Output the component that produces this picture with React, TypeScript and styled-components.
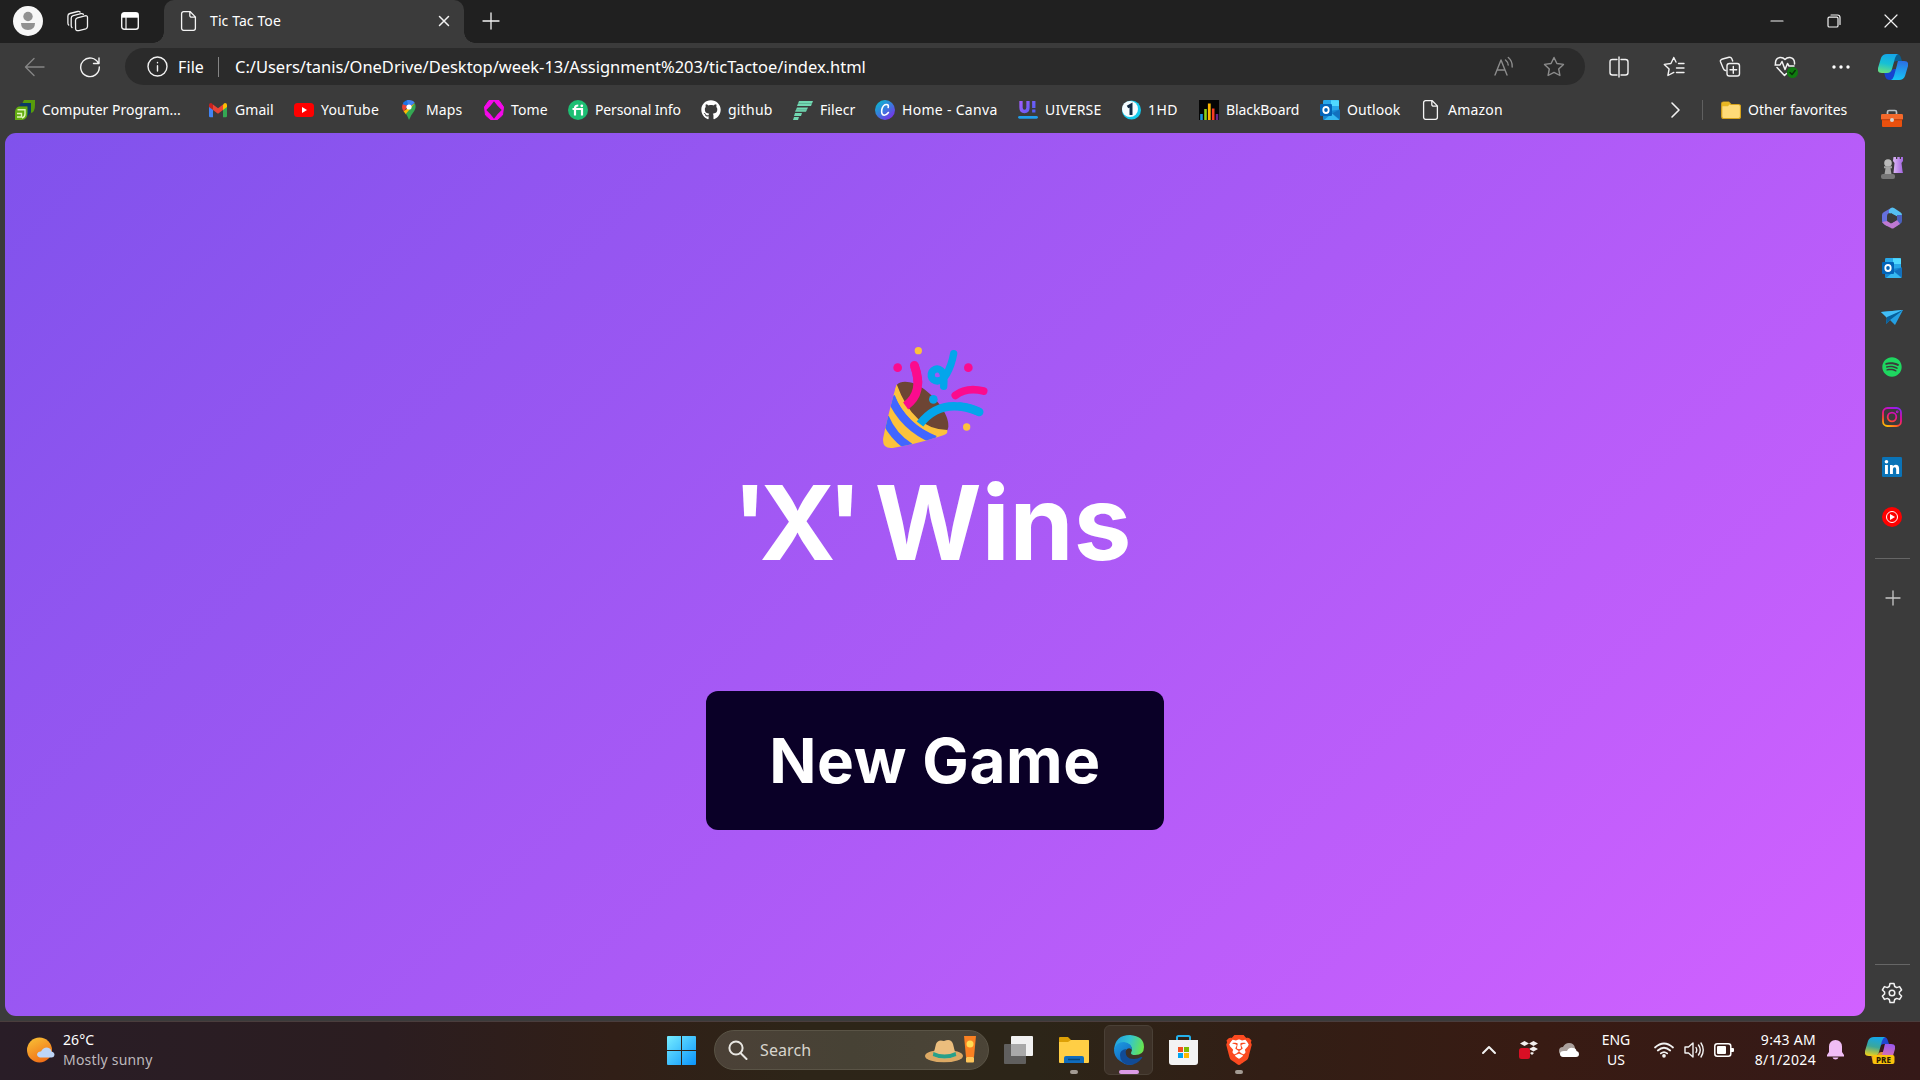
import React from "react";
import styled, { createGlobalStyle } from "styled-components";
import { FaGithub, FaSpotify } from "react-icons/fa";
import { SiBrave } from "react-icons/si";

const Global = createGlobalStyle`
  * { box-sizing: border-box; }
  html, body { margin: 0; background: #3b3b3b; overflow: hidden; }
  body { font-family: "Noto Sans", "Open Sans", sans-serif; color: #fff; }
  svg { display: block; flex: none; }
`;

const Screen = styled.div`
  width: 1920px;
  height: 1080px;
  display: flex;
  flex-direction: column;
  background: #3b3b3b;
`;

const TabStrip = styled.header`
  height: 43px;
  background: #202020;
  display: flex;
  align-items: center;
  padding-bottom: 1px;
`;

const Slot = styled.div<{ $w: number; $h?: number }>`
  width: ${(p) => p.$w}px;
  height: ${(p) => (p.$h ? `${p.$h}px` : "auto")};
  flex: none;
  display: flex;
  align-items: center;
  justify-content: center;
`;

const Tab = styled.div`
  position: relative;
  width: 300px;
  height: 43px;
  margin-bottom: -1px;
  padding: 0 12px 2px 15px;
  display: flex;
  align-items: center;
  background: #3b3b3b;
  border-radius: 10px 10px 0 0;
  &::before, &::after {
    content: "";
    position: absolute;
    bottom: 0;
    width: 11px;
    height: 11px;
  }
  &::before { right: 100%; background: radial-gradient(circle at 0 0, transparent 10.5px, #3b3b3b 11px); }
  &::after { left: 100%; background: radial-gradient(circle at 100% 0, transparent 10.5px, #3b3b3b 11px); }
`;

const Label = styled.span<{ $w?: number; $size?: number; $ls?: number; $color?: string }>`
  width: ${(p) => (p.$w ? `${p.$w}px` : "auto")};
  flex: none;
  white-space: nowrap;
  font-size: ${(p) => p.$size ?? 14}px;
  letter-spacing: ${(p) => p.$ls ?? 0}px;
  line-height: 20px;
  color: ${(p) => p.$color ?? "#fff"};
`;

const Spacer = styled.div`flex: 1;`;

const Toolbar = styled.div`
  height: 47px;
  flex: none;
  display: flex;
  align-items: center;
`;

const AddressBar = styled.div`
  width: 1460px;
  height: 37px;
  border-radius: 19px;
  background: #2b2b2b;
  display: flex;
  align-items: center;
  padding: 0 6px 0 22px;
`;

const VLine = styled.div<{ $h: number; $color: string }>`
  width: 1px;
  height: ${(p) => p.$h}px;
  background: ${(p) => p.$color};
`;

const Main = styled.div`
  flex: 1;
  display: flex;
  min-height: 0;
`;

const Content = styled.div`
  width: 1865px;
  padding: 0 0 5px 5px;
  display: flex;
  flex-direction: column;
`;

const Favorites = styled.nav`
  height: 43px;
  flex: none;
  padding: 0 18px 3px 10px;
  display: flex;
  align-items: center;
`;

const Favorite = styled.div<{ $w: number }>`
  width: ${(p) => p.$w}px;
  flex: none;
  display: flex;
  align-items: center;
  gap: 7px;
`;

const Page = styled.main`
  flex: 1;
  border-radius: 11px;
  background: linear-gradient(135deg, #8052ec, #d161ff);
  display: flex;
  flex-direction: column;
  align-items: center;
  padding-top: 197px;
`;

const Message = styled.h1`
  margin: 0;
  height: 231px;
  padding-right: 6px;
  white-space: nowrap;
  font: 700 103px/126px Inter, sans-serif;
  letter-spacing: -4px;
`;

const Winner = styled.span`letter-spacing: -8px;`;
const Verdict = styled.span`letter-spacing: 0;`;

const NewGame = styled.button`
  width: 458px;
  height: 139px;
  flex: none;
  border: 0;
  border-radius: 12px;
  background: #0a0027;
  color: #fff;
  font: 700 62px/64px Inter, sans-serif;
  letter-spacing: 0.6px;
`;

const Sidebar = styled.aside`
  width: 55px;
  display: flex;
  flex-direction: column;
  align-items: center;
  padding-top: 3px;
`;

const SideItem = styled.div<{ $h?: number }>`
  height: ${(p) => p.$h ?? 49.9}px;
  width: 55px;
  padding-right: 1px;
  display: flex;
  align-items: center;
  justify-content: center;
`;

const HLine = styled.div`
  width: 35px;
  height: 1px;
  background: #666;
`;

const Taskbar = styled.footer`
  height: 59px;
  flex: none;
  border-top: 1px solid #4a3d3d;
  padding-bottom: 2px;
  background: linear-gradient(90deg, #291d27 0%, #2b1d20 20%, #311f17 32%, #2d2518 42%, #2c2518 54%, #321e15 66%, #381b13 80%, #351918 100%);
  display: flex;
  align-items: center;
`;

const Lines = styled.div<{ $w: number; $align: string }>`
  width: ${(p) => p.$w}px;
  flex: none;
  display: flex;
  flex-direction: column;
  align-items: ${(p) => p.$align};
`;

const Search = styled.div`
  width: 275px;
  height: 40px;
  border-radius: 20px;
  border: 1px solid #5a5446;
  background: linear-gradient(90deg, #4b4137, #474235 50%, #4b4437);
  display: flex;
  align-items: center;
  padding: 0 11px 0 13px;
`;

const AppTile = styled.div<{ $active?: boolean }>`
  width: 49px;
  height: 50px;
  margin-right: 6px;
  border-radius: 6px;
  border: 1px solid ${(p) => (p.$active ? "#4a4036" : "transparent")};
  background: ${(p) => (p.$active ? "#3d3127" : "transparent")};
  display: flex;
  flex-direction: column;
  align-items: center;
  padding-top: 9px;
`;

const Indicator = styled.div<{ $active?: boolean }>`
  width: ${(p) => (p.$active ? 20 : 8)}px;
  height: 4px;
  margin-top: 5px;
  border-radius: 2px;
  background: ${(p) => (p.$active ? "#dc9be6" : "#a39b93")};
`;

const FileIcon = ({ size = 20 }: { size?: number }) => (
  <svg width={size} height={size} viewBox="0 0 20 20" fill="none" stroke="#f4f4f4" strokeWidth="1.3">
    <path d="M4.6.7h6.6l5.2 5.2v11.4a2 2 0 0 1-2 2H4.6a2 2 0 0 1-2-2V2.700a2 2 0 0 1 2-2ZM10.8.9v3.500a1.800 1.800 0 0 0 1.800 1.800h3.600" />
  </svg>
);

const Outlook = () => (
  <svg width="20" height="20" viewBox="0 0 20 20">
    <rect x="3" y="0" width="16" height="13" rx="1.2" fill="#28a8ea" />
    <path d="M11 .2h7.300q.7 0 .7.8v5h-8Z" fill="#50d9ff" />
    <path d="M3 12 19.800 9.500V19q0 1-1 1H4q-1 0-1-1Z" fill="#1686d1" />
    <path d="m12 13.500 7.800-4V19Z" fill="#1270be" />
    <path d="m4 20 8-6.500L19.500 20Z" fill="#35b8f1" />
    <rect x="0" y="4" width="12" height="12" rx="1.1" fill="#0364b8" />
    <ellipse cx="6" cy="10" rx="2.700" ry="3" fill="none" stroke="#fff" strokeWidth="1.800" />
  </svg>
);

const Copilot = ({ pre }: { pre?: boolean }) => (
  <svg width="30" height="28" viewBox="0 0 30 28">
    <defs>
      <linearGradient id={pre ? "pa" : "ca"} x1=".5" y1="0" x2=".3" y2="1">
        <stop offset="0" stopColor="#15a6e8" /><stop offset=".5" stopColor={pre ? "#3ba79a" : "#16c0d5"} /><stop offset="1" stopColor={pre ? "#f0d018" : "#6be07c"} />
      </linearGradient>
      <linearGradient id={pre ? "pb" : "cb"} x1=".5" y1="0" x2=".4" y2="1">
        <stop offset="0" stopColor={pre ? "#9a58ef" : "#2b70e4"} /><stop offset="1" stopColor={pre ? "#f87e92" : "#17c5f5"} />
      </linearGradient>
    </defs>
    <path d="M16 1h3q3 0 4 4l1 3h-5q-3 0-4 3Z" fill={pre ? "#2046cf" : "#0a5f91"} />
    <path d="M12 19H6l1 4q1 4 5 4h3q3 0 4-4l2-7h-5q-2 0-4 3Z" fill={pre ? "#e78b36" : "#1643cf"} />
    <path d="M9 1h11q-2 1-3 4l-3 11q-1 4-5 4H4q-5 0-4-5L3 5q1.500-4 6-4Z" fill={`url(#${pre ? "pa" : "ca"})`} />
    <path d="M20 8h6q5 0 4 5l-3 10q-1.500 4-6 4h-8q2-1 3-4l3-11q.5-3 1-4Z" fill={`url(#${pre ? "pb" : "cb"})`} />
    {pre && (
      <>
        <rect x="7.500" y="19" width="22" height="9" rx="2" fill="#f9c20c" />
        <text x="18.500" y="26.500" textAnchor="middle" fontFamily="Noto Sans, sans-serif" fontWeight="800" fontSize="8" fill="#2b1c00">PRE</text>
      </>
    )}
  </svg>
);

const favIcons: Record<string, React.ReactNode> = {
  geeks: (
    <>
      <path d="M9 0h11v5q0 7-4 8V4H7Z" fill="#589b0b" />
      <path d="M6 3h10v7q0 4-4 6V6H4Z" fill="#0c3a66" />
      <path d="M4 6.500h8.500V13q0 6.500-6 7H0v-7q0-5.500 4-6.500Z" fill="#62ad10" />
      <path d="M2.500 9.800H10V14q0 3-3 4M2 13.500h4.500V17H2" fill="none" stroke="#dff5b9" strokeWidth="1.400" />
    </>
  ),
  gmail: (
    <>
      <path d="M1 5v11q0 1.300 1.300 1.300H5V8Z" fill="#4285f4" />
      <path d="M15 8v9.300h2.700q1.300 0 1.300-1.300V5Z" fill="#34a853" />
      <path d="M15 4.500V10l4-3V5q0-2-2-2-1 0-2 1.500Z" fill="#fbbc04" />
      <path d="M1 5v2l4 3V4.500Q4 3 3 3 1 3 1 5Z" fill="#c5221f" />
      <path d="M5 4.500 10 8.300l5-3.800V10l-5 3.800L5 10Z" fill="#ea4335" />
    </>
  ),
  youtube: (<><rect y="3" width="20" height="14" rx="3.500" fill="#f00" /><path d="m8 7 5 3-5 3Z" fill="#fff" /></>),
  maps: (
    <>
      <path d="M10 0a7 7 0 0 0-6.400 4.200L10 10Z" fill="#1a73e8" />
      <path d="M3.600 4.200q-1.500 4 1.200 7.300L9 6Z" fill="#ea4335" />
      <path d="M8 1q-1-1 2-1 4 0 5.700 2.700L10 8Z" fill="#4285f4" />
      <path d="M15.800 3.300 4.600 11.300 7 14.400l8.400-8Z" fill="#fbbc04" />
      <path d="M15.800 3.300q2 4-.7 8Q12 15 10 20q-1.200-3.200-3-6.200Z" fill="#34a853" />
      <circle cx="10" cy="7" r="2.600" fill="#fff" />
    </>
  ),
  tome: (<><path d="m5 .5h10l4.500 6.500-1 8-5 4.500h-7l-5-4.500-1-8Z" fill="#f508ea" stroke="#f508ea" strokeLinejoin="round" /><path d="m10 1.200 3.500 4.600 4.200 4.200-4.200 4.200-3.500 4.600-3.500-4.600L2.300 10l4.200-4.200Z" fill="#3b3b3b" /></>),
  fi: (<><circle cx="10" cy="10" r="10" fill="#1dbf73" /><path d="M4.500 9H14v6.500M7 15.500V8q0-2.500 3.300-2.500" fill="none" stroke="#fff" strokeWidth="2.200" /><circle cx="13.800" cy="5.800" r="1.400" fill="#fff" /></>),
  filecr: (<g fill="#72d8b2"><path d="M6 1h14l-2 5H4ZM4 7.500h11l-2 4.300H2ZM2 13h7l-1 3H1ZM1 17h5l-1 3H0Z" /><path d="M5 3.500h14M3 9.800h11" stroke="#4f9880" strokeWidth=".6" /></g>),
  canva: (<><circle cx="10" cy="10" r="10" fill="url(#canva)" /><path d="M13.200 7.500q.8-3-1.700-3-3.500 0-4.700 5-.8 5.500 2.400 5.700 2.300 0 4.200-2.700" fill="none" stroke="#fff" strokeWidth="1.600" strokeLinecap="round" /></>),
  uiverse: (<g fill="none" stroke="url(#uiv)" strokeWidth="3.300"><path d="M3 1v6.500q0 4 3.500 4T10 7.500V1M15.800 1v7M15.800 9.500v3" /><path d="M1.500 17.300h17" stroke="#219fec" strokeWidth="2.800" strokeLinecap="round" /></g>),
  hd: (<><circle cx="10.500" cy="10" r="9.500" fill="#14cbed" /><circle cx="9" cy="9" r="8" fill="#f5fcff" /><path d="M6.500 7 10 5v10" fill="none" stroke="#102a42" strokeWidth="3" /></>),
  bars: (<><rect width="20" height="20" fill="#050505" /><path d="M2.500 20v-6" stroke="#1895df" strokeWidth="2.600" /><path d="M6.500 20V9" stroke="#8bcf15" strokeWidth="2.600" /><path d="M10.300 20V3.500" stroke="#ffb700" strokeWidth="2.800" /><path d="M14.200 20V8.500" stroke="#fb3d22" strokeWidth="2.600" /><path d="M18 20v-6" stroke="#6a2788" strokeWidth="2.500" /></>),
};

const favorites: { icon: string; text: string; w: number; ls: number }[] = [
  { icon: "geeks", text: "Computer Program...", w: 193, ls: 0 },
  { icon: "gmail", text: "Gmail", w: 86, ls: 0.05 },
  { icon: "youtube", text: "YouTube", w: 105, ls: 0.2 },
  { icon: "maps", text: "Maps", w: 85, ls: 0.1 },
  { icon: "tome", text: "Tome", w: 84, ls: 0.1 },
  { icon: "fi", text: "Personal Info", w: 133, ls: -0.15 },
  { icon: "github", text: "github", w: 92, ls: 0.25 },
  { icon: "filecr", text: "Filecr", w: 82, ls: 0.1 },
  { icon: "canva", text: "Home - Canva", w: 143, ls: 0.3 },
  { icon: "uiverse", text: "UIVERSE", w: 103, ls: 0.15 },
  { icon: "hd", text: "1HD", w: 78, ls: 0.4 },
  { icon: "bars", text: "BlackBoard", w: 121, ls: -0.1 },
  { icon: "outlook", text: "Outlook", w: 101, ls: 0.1 },
  { icon: "file", text: "Amazon", w: 100, ls: 0.2 },
];

const FavIcon = ({ name }: { name: string }) => {
  if (name === "github") return <FaGithub size={20} color="#fff" />;
  if (name === "outlook") return <Outlook />;
  if (name === "file") return <FileIcon />;
  return (
    <svg width="20" height="20" viewBox="0 0 20 20">
      <defs>
        <linearGradient id="canva" x1="0" y1="0" x2=".8" y2="1"><stop offset="0" stopColor="#00c4cc" /><stop offset=".5" stopColor="#3580dc" /><stop offset="1" stopColor="#7d2ae8" /></linearGradient>
        <linearGradient id="uiv" gradientUnits="userSpaceOnUse" x1="0" y1="0" x2="18" y2="14"><stop offset="0" stopColor="#ad5cff" /><stop offset="1" stopColor="#455ef4" /></linearGradient>
      </defs>
      {favIcons[name]}
    </svg>
  );
};

const Line = ({ d, size = 22, color = "#f2f2f2", sw = 1.4, children }: { d: string; size?: number; color?: string; sw?: number; children?: React.ReactNode }) => (
  <svg width={size} height={size} viewBox={`0 0 ${size} ${size}`} fill="none" stroke={color} strokeWidth={sw} strokeLinecap="round" strokeLinejoin="round">
    <path d={d} />
    {children}
  </svg>
);

const STAR = "m11 1.500 2.900 6 6.600.9-4.800 4.600 1.200 6.500-5.900-3.100-5.900 3.100 1.200-6.500L1.500 8.400l6.600-.9Z";

const sideIcons: React.ReactNode[] = [
  <svg width="22" height="18" viewBox="0 0 22 18"><path d="M6.500 6V3q0-1.500 1.500-1.500h6q1.500 0 1.500 1.500v3" fill="none" stroke="#b9bfc3" strokeWidth="1.700" /><rect x="1" y="9" width="20" height="9" rx="1" fill="#e9500e" /><rect y="5" width="22" height="6" rx="1.200" fill="#f4692b" /><path d="M0 10.700h22" stroke="#aa3206" strokeWidth=".8" /><circle cx="11" cy="11" r="2" fill="#d8d4d0" /></svg>,
  <svg width="22" height="22" viewBox="0 0 22 22"><defs><linearGradient id="rook"><stop stopColor="#ddb9f6" /><stop offset="1" stopColor="#a366e0" /></linearGradient></defs><path d="M12.500 0H15v2h1.300V0h2.500v2H20V0h2v4l-1.500 2 1 8 .5 2h-9.500l1-10-1.500-2Z" fill="url(#rook)" /><circle cx="7" cy="6" r="3.800" fill="#bbb" /><path d="M3 9.200h8v2H9.500l1 6h-7l1-6H3Z" fill="#a5a5a5" /><rect y="17" width="14" height="5" rx="2" fill="#777" /></svg>,
  <svg width="20" height="22" viewBox="0 0 20 22"><path d="M9 1 2 5Q0 6 0 8v6q0 2 2 3l3 2V9q0-2 2-3l5-3Z" fill="#6570de" /><path d="M9 1q1-1 3 0l6 4q2 1 2 3v5l-5-3.500L7 6V3Z" fill="#55c0f2" /><path d="M20 8v6q0 2-2 3l-5 3-3-4 5-3V8Z" fill="#4b60be" /><path d="m5 14 4 2.500 6-3.500 3 4-6 4q-1.500 1-3 0l-6-3-3-3Z" fill="#bf79d3" /><path d="m6 9 3-3 6 3.500V13l-5 3-4-2.500Z" fill="#3b3b3b" /></svg>,
  <Outlook />,
  <svg width="22" height="15" viewBox="0 0 22 15"><path d="M0 2 22 0 14 15 9 10 5 14 6 7Z" fill="#249fe2" /><path d="M22 0 6 8 0 2Z" fill="#41bff8" /><path d="M22 0 9 10l-4 4 1-7Z" fill="#075f9b" /></svg>,
  <FaSpotify size={20} color="#1ed760" />,
  <svg width="20" height="20" viewBox="0 0 20 20" fill="none" stroke="url(#ig)" strokeWidth="1.800"><defs><linearGradient id="ig" gradientUnits="userSpaceOnUse" x1="4" y1="20" x2="14" y2="0"><stop stopColor="#ffd000" /><stop offset=".3" stopColor="#ff4d2b" /><stop offset=".6" stopColor="#e90a9a" /><stop offset="1" stopColor="#8b20f5" /></linearGradient></defs><rect x="1" y="1" width="18" height="18" rx="4.500" /><circle cx="10" cy="10" r="4.300" /><circle cx="15.200" cy="4.800" r=".5" /></svg>,
  <svg width="20" height="20" viewBox="0 0 20 20"><rect width="20" height="20" rx="1.200" fill="#0a73b7" /><path d="M3 8h2.900v9H3Zm5 0h2.700v1.300q1-1.600 3-1.600 3.400 0 3.400 4.100V17h-2.900v-4.500q0-2.300-1.600-2.300-1.700 0-1.700 2.300V17H8Z" fill="#fff" /><circle cx="4.450" cy="4.700" r="1.800" fill="#fff" /></svg>,
  <svg width="20" height="20" viewBox="0 0 20 20"><circle cx="10" cy="10" r="10" fill="#f00" /><circle cx="10" cy="10" r="5.500" fill="none" stroke="#fff" strokeWidth="1" /><path d="m8 7 5 3-5 3Z" fill="#fff" /></svg>,
];

const Popper = () => (
  <svg width="150" height="130" viewBox="0 0 450 390">
    <defs><clipPath id="cone"><path d="M110 163C96 210 72 308 69 330q0 27 29 24c50-8 115-25 154-39q13-5 10-15Q160 300 110 163Z" /></clipPath></defs>
    <path d="M110 165C125 147 163 155 192 177c45 34 77 83 73 114q-3 19-22 20C190 302 118 225 110 165Z" fill="#6d4534" />
    <g clipPath="url(#cone)">
      <rect x="60" y="150" width="210" height="210" fill="#fcc23c" />
      <path d="M92 200Q130 292 225 330" fill="none" stroke="#4166ff" strokeWidth="26" />
      <path d="M74 262Q98 320 150 352" fill="none" stroke="#4166ff" strokeWidth="26" />
    </g>
    <path d="M110 165C118 225 190 302 243 311q-45 3-94-47Q105 217 105 180Z" fill="#fcc23c" />
    <g fill="none" strokeLinecap="round">
      <path d="M163 106Q193 188 137 228" stroke="#fb0b8e" strokeWidth="26" strokeLinecap="butt" />
      <path d="M163 106q9 23 11 50" stroke="#fb0b8e" strokeWidth="26" />
      <path d="M180 282Q245 198 358 246" stroke="#04a5eb" strokeWidth="25" strokeLinecap="butt" />
      <path d="M300 229q30 2 58 17" stroke="#04a5eb" strokeWidth="25" />
      <path d="M286 196Q320 170 371 183" stroke="#fb0b8e" strokeWidth="23" />
      <path d="M281 71q-6 34-21 61-12 21-28 21a18 18 0 1 1 15-27q7 12 4 43" stroke="#04a5eb" strokeWidth="22" />
    </g>
    <circle cx="220" cy="208" r="13" fill="#04a5eb" />
    <g fill="#fb0b8e"><circle cx="113" cy="113" r="13" /><circle cx="325" cy="113" r="13" /></g>
    <g fill="#fcc23c"><circle cx="175" cy="62" r="11" /><circle cx="320" cy="291" r="11" /></g>
  </svg>
);

const Hat = () => (
  <svg width="52" height="28" viewBox="0 0 52 28">
    <ellipse cx="19" cy="20" rx="19" ry="6.300" fill="#dca964" />
    <path d="M8 20 11 8q2-5 8-3 7-3 9 3l3 12q-12 6-23 0Z" fill="#ebbd7d" />
    <path d="M8.500 16q11 5 22 0l.8 4q-12 5-23.500 0Z" fill="#27a08a" />
    <path d="M39 0h12l-2 21h-8Z" fill="#f98022" /><rect x="41" y="21" width="8" height="5.500" rx="1" fill="#ffc65a" /><circle cx="45" cy="8" r="3.500" fill="#ffdb54" />
  </svg>
);

const StartIcon = () => (
  <svg width="29" height="29" viewBox="0 0 29 29"><defs><linearGradient id="win" x1="0" y1="0" x2="1" y2="1"><stop stopColor="#76edff" /><stop offset="1" stopColor="#0a94fc" /></linearGradient></defs><path d="M1 0h13v14H0V1q0-1 1-1Zm14 0h13q1 0 1 1v13H15ZM0 15h14v14H1q-1 0-1-1Zm15 0h14v13q0 1-1 1H15Z" fill="url(#win)" /></svg>
);

const EdgeIcon = () => (
  <svg width="30" height="30" viewBox="0 0 30 30">
    <defs>
      <linearGradient id="e1" x1="0" y1=".3" x2="1" y2=".5"><stop stopColor="#219ee0" /><stop offset=".5" stopColor="#34c5cf" /><stop offset="1" stopColor="#69e64c" /></linearGradient>
      <linearGradient id="e2" x1="0" y1="0" x2=".6" y2="1"><stop stopColor="#1b9de2" /><stop offset="1" stopColor="#1461bd" /></linearGradient>
    </defs>
    <path d="M0 15Q1 0 16 0q14 1 14 12 0 8-9 8-4 0-4-2l1-3q0-5-6-7-7-1-12 7Z" fill="url(#e1)" />
    <path d="M0 15Q2 7 10 7q8 1 8 8-2-3-5-1-5 4-2 10 3 5 9 6-8 1-14-4-6-4-6-11Z" fill="url(#e2)" />
    <path d="M12 14q-2 10 8 10 4 0 7-2 2-.5 1 1-5 7-13 7-9-2-9-10 0-5 6-6Z" fill="#114b96" />
  </svg>
);

export default function App() {
  return (
    <Screen>
      <Global />
      <TabStrip>
        <Slot $w={56}>
          <svg width="30" height="30" viewBox="0 0 30 30"><circle cx="15" cy="15" r="15" fill="#f7f7f7" /><circle cx="15" cy="10.500" r="4.700" fill="#919191" /><path d="M8 17h14q0 7-7 7t-7-7Z" fill="#919191" /></svg>
        </Slot>
        <Slot $w={43}>
          <Line size={22} sw={1.300} d="M8.500 10.500q0-2 1.900-2.600l7.500-2q2.600-.6 2.600 1.600v9q0 1.800-1.700 2.300l-7 1.800q-2.800.6-3.200-1.700ZM5 17.500q-.8-.7-.8-2V8.200q0-2 2-2.500l7.800-2q1.500-.4 2.400.5M1.700 15q-.8-.7-.8-2V6q0-2 2-2.500l7.800-2q1.500-.4 2.400.5" />
        </Slot>
        <Slot $w={62}>
          <svg width="18" height="18" viewBox="0 0 18 18"><rect x=".7" y=".7" width="16.600" height="16.600" rx="2.500" fill="none" stroke="#f4f4f4" strokeWidth="1.400" /><path d="M1 1h16v4.700H1Z" fill="#fff" /><path d="M5 5v12" stroke="#f4f4f4" strokeWidth="1.200" /></svg>
        </Slot>
        <Slot $w={3} />
        <Tab>
          <FileIcon size={20} />
          <Slot $w={11} />
          <Label $ls={0.1}>Tic Tac Toe</Label>
          <Spacer />
          <Slot $w={16}><Line size={12} sw={1.500} d="m1.500 1.500 9 9m0-9-9 9" /></Slot>
        </Tab>
        <Slot $w={53}><Line size={18} sw={1.300} d="M9 1v16M1 9h16" /></Slot>
        <Spacer />
        <Slot $w={57}><Line size={14} sw={1.200} d="M1 7h12" /></Slot>
        <Slot $w={57}><Line size={14} sw={1.200} d="M1 4.500q0-1.300 1.300-1.300h7.400q1.300 0 1.300 1.300v7.200q0 1.300-1.300 1.300H2.300Q1 13 1 11.700ZM4 1h6.500Q13 1 13 3.500v7" /></Slot>
        <Slot $w={58}><Line size={14} sw={1.200} d="m1 1 12 12m0-12L1 13" /></Slot>
      </TabStrip>
      <Toolbar>
        <Slot $w={15} />
        <Slot $w={39}><Line size={22} color="#858585" d="M20 11H2M10 2.500 1.500 11l8.500 8.500" /></Slot>
        <Slot $w={71}><Line size={22} d="M19.500 7.500A9.300 9.300 0 1 0 20.300 11M20 2v5.500h-5.500" /></Slot>
        <AddressBar>
          <Line size={21} d="M10.500 9.700V15M10.500 6.500v.3"><circle cx="10.500" cy="10.500" r="9.500" /></Line>
          <Slot $w={10} />
          <Label $w={40} $size={16} $ls={0.1}>File</Label>
          <VLine $h={20} $color="#858585" />
          <Slot $w={16} />
          <Label $size={16.500} $ls={-0.02}>C:/Users/tanis/OneDrive/Desktop/week-13/Assignment%203/ticTactoe/index.html</Label>
          <Spacer />
          <Slot $w={50}><Line size={22} color="#8c8c8c" d="m2 19 6-15 6 15M4.200 14h7.600M12.500 4q2.500 2 2.700 5M15.300 1.500Q19.500 5 19.200 11" /></Slot>
          <Slot $w={50}><Line size={22} color="#8c8c8c" d={STAR} /></Slot>
        </AddressBar>
        <Slot $w={6} />
        <Slot $w={55}><Line size={22} d="M9 3.500H4.500q-2.500 0-2.500 2.500v10.500Q2 19 4.500 19H9M13 3.500h4.500Q20 3.500 20 6v10.500q0 2.500-2.500 2.500H13M11 1v20" /></Slot>
        <Slot $w={56}><Line size={22} d="m13 6-2.200-4.500-2.900 6-6.600.9 4.800 4.600-1.200 6.500 5.900-3.100M15.500 7.500H21M13.500 12H21M13.500 16.500H21" /></Slot>
        <Slot $w={56}><Line size={22} d="M10.500 7.500h7.700q2.300 0 2.300 2.300v7.900q0 2.300-2.300 2.300h-7.900Q8 20 8 17.700V9.800q0-2.300 2.500-2.300ZM14.300 10.500v6.700M11 13.800h6.700M6.500 14.500q-1.500-.3-2.200-2L1.500 5.700Q.9 4 2.700 3.300L10 1.300q2-.5 2.700 1.200l1 2.500" /></Slot>
        <Slot $w={56}>
          <Line size={24} sw={1.500} d="M1.500 9Q1 3.500 6 2.500q3-.3 5 2 2-2.300 5-2 5 1 4.500 6.500M3 12.500l7.500 8 2-2M1 10h5l2-3.500 3 8 2.500-6 1.500 2.500h5"><circle cx="18.500" cy="17.500" r="5.500" fill="#0f7b0f" stroke="none" /><path d="m16 17.500 2 2 3.200-4" stroke="#08300a" /></Line>
        </Slot>
        <Slot $w={53}><svg width="18" height="4" viewBox="0 0 18 4" fill="#fff"><circle cx="2" cy="2" r="1.700" /><circle cx="9" cy="2" r="1.700" /><circle cx="16" cy="2" r="1.700" /></svg></Slot>
        <Slot $w={51}><Copilot /></Slot>
      </Toolbar>
      <Main>
        <Content>
          <Favorites>
            {favorites.map((f) => (
              <Favorite key={f.text} $w={f.w}>
                <FavIcon name={f.icon} />
                <Label $ls={f.ls}>{f.text}</Label>
              </Favorite>
            ))}
            <Spacer />
            <Line size={18} sw={1.600} d="m6 2 7 7-7 7" />
            <Slot $w={18} />
            <VLine $h={20} $color="#606060" />
            <Slot $w={18} />
            <svg width="20" height="18" viewBox="0 0 20 18"><path d="M.7 3q0-2 2-2h5l2.300 2.500h7.500q2 0 2 2v10q0 2-2 2h-15q-1.800 0-1.800-2Z" fill="#ffdb78" stroke="#d6a21a" strokeWidth="1.200" /><path d="M1 3q0-1.700 1.700-1.700h4.800l1.500 2-2.200 2H1Z" fill="#e9b620" /></svg>
            <Slot $w={7} />
            <Label $w={99} $ls={0}>Other favorites</Label>
          </Favorites>
          <Page>
            <Popper />
            <Message><Winner>'X'</Winner> <Verdict>Wins</Verdict></Message>
            <NewGame>New Game</NewGame>
          </Page>
        </Content>
        <Sidebar>
          {sideIcons.map((icon, i) => <SideItem key={i}>{icon}</SideItem>)}
          <Slot $w={1} $h={16} />
          <HLine />
          <Slot $w={22} $h={78}><Line size={16} sw={1.300} color="#c8c8c8" d="M8 1v14M1 8h14" /></Slot>
          <Spacer />
          <HLine />
          <SideItem $h={56}>
            <Line size={22} sw={1.500} d="M9 1.500h4l.7 3 2 1.100 2.900-1 2 3.400-2.200 2v2l2.200 2-2 3.400-2.900-1-2 1.100-.7 3H9l-.7-3-2-1.100-2.900 1-2-3.400 2.200-2v-2l-2.200-2 2-3.400 2.900 1 2-1.100Z"><circle cx="11" cy="11" r="2.800" /></Line>
          </SideItem>
        </Sidebar>
      </Main>
      <Taskbar>
        <Slot $w={27} />
        <svg width="28" height="27" viewBox="0 0 28 27"><defs><linearGradient id="sun" x1=".2" y1="0" x2=".7" y2="1"><stop stopColor="#f7bd35" /><stop offset="1" stopColor="#f06b16" /></linearGradient></defs><circle cx="12.500" cy="13" r="12.500" fill="url(#sun)" /><path d="M13 20.500q-3-1-3-3.500 1-3 4-2.500 2-4 6-4 4 .5 4.500 4 3 .5 3 3.500-.5 2.500-3 2.500Z" fill="#bdd5f7" /></svg>
        <Slot $w={8} />
        <Lines $w={604} $align="flex-start"><Label $ls={0.1}>26°C</Label><Label $ls={0.2} $color="#bdb8bc">Mostly sunny</Label></Lines>
        <StartIcon />
        <Slot $w={18} />
        <Search>
          <Line size={20} sw={2} color="#e9e7e2" d="m12.500 13 6 6"><circle cx="8" cy="8" r="6.600" /></Line>
          <Slot $w={12} />
          <Label $size={16} $ls={0.1} $color="#d8d5ce">Search</Label>
          <Spacer />
          <Hat />
        </Search>
        <Slot $w={5} />
        <AppTile>
          <svg width="29" height="30" viewBox="0 0 29 30"><rect x="7" y="1" width="22" height="20" rx="1" fill="#f1f1f1" /><rect y="9" width="22" height="20" rx="1" fill="#666" fillOpacity=".9" /><rect x="7" y="9" width="15" height="12" fill="#a9a9a9" /></svg>
        </AppTile>
        <AppTile>
          <svg width="30" height="30" viewBox="0 0 30 30"><path d="M0 3q0-1 1-1h8l3 3h17q1 0 1 1v9H0Z" fill="#dda006" /><path d="M0 7h9l3-2h17q1 0 1 1v21q0 1-1 1H1q-1 0-1-1Z" fill="#ffce45" /><path d="M5 28v-5q0-2 2-2h16q2 0 2 2v5Z" fill="#106cbd" /><path d="M9 24.500h12" stroke="#064577" strokeWidth="1.500" /></svg>
          <Indicator />
        </AppTile>
        <AppTile $active><EdgeIcon /><Indicator $active /></AppTile>
        <AppTile>
          <svg width="29" height="30" viewBox="0 0 29 30"><path d="M8 6V2.500Q8 1 9.500 1h10Q21 1 21 2.500V6" fill="none" stroke="#24b1eb" strokeWidth="2" /><path d="M0 5h29v22q0 3-3 3H3q-3 0-3-3Z" fill="#f3f3f3" /><path d="M9 12h5v5H9Z" fill="#f25022" /><path d="M15 12h5v5h-5Z" fill="#7fba00" /><path d="M9 18h5v5H9Z" fill="#00a4ef" /><path d="M15 18h5v5h-5Z" fill="#ffb900" /></svg>
        </AppTile>
        <AppTile>
          <svg width="30" height="30" viewBox="0 0 30 30"><path d="m8 4 14 0 3 5-3 12-7 6-7-6L5 9Z" fill="#fff" /><SiBrave x="0" y="0" size={30} color="#fb4a20" /></svg>
          <Indicator />
        </AppTile>
        <Spacer />
        <Slot $w={16}><Line size={16} sw={2} d="m2 11 6-6 6 6" /></Slot>
        <Slot $w={22} />
        <svg width="20" height="20" viewBox="0 0 20 20"><g fill="#f3efee"><path d="m1 3.500 4.500-2.500L10 3.500 5.500 6ZM10 3.500 14.500 1 19 3.500 14.500 6ZM10 9l4.500-2.500L19 9l-4.500 2.500ZM11 13l2-1 2 1-2 2Z" /></g><rect x="0" y="8" width="11" height="11" rx="2.500" fill="#d90f24" /></svg>
        <Slot $w={20} />
        <svg width="20" height="14" viewBox="0 0 20 14"><path d="M4 12Q0 12 0 8t4-4q2-4 6-4 5 0 6 5v7Z" fill="#aaa09c" /><path d="M4 14q-3-.5-3-3 0-3 4-3h3q2-4 6-3 3 0 3.500 3 2.500.5 2.500 3 0 3-3 3Z" fill="#fff" /></svg>
        <Slot $w={10} />
        <Lines $w={54} $align="center"><Label>ENG</Label><Label>US</Label></Lines>
        <Slot $w={11} />
        <Slot $w={20}><Line size={20} sw={1.700} d="M1 7.500q9-8 18 0M3.800 10.500q6.200-5.500 12.400 0M6.800 13.400q3.200-2.700 6.400 0"><circle cx="10" cy="15.800" r="1" fill="#fff" /></Line></Slot>
        <Slot $w={10} />
        <Slot $w={20}><Line size={20} sw={1.400} d="M1 7h3.500L9 3v14l-4.500-4H1ZM12 7.500q1.500 2.500 0 5M14.500 5q3.500 5 0 10M17 3q4.500 7 0 14" /></Slot>
        <Slot $w={10} />
        <Slot $w={20}><svg width="20" height="14" viewBox="0 0 20 14"><rect x=".8" y=".8" width="16" height="12.400" rx="2.500" fill="none" stroke="#fff" strokeWidth="1.500" /><rect x="3" y="3" width="9" height="8" rx="1" fill="#fff" /><path d="M17 5h2q1 0 1 1v2q0 1-1 1h-2Z" fill="#fff" /></svg></Slot>
        <Lines $w={82} $align="flex-end"><Label $ls={0.3}>9:43 AM</Label><Label $ls={0.35}>8/1/2024</Label></Lines>
        <Slot $w={38}><svg width="17" height="20" viewBox="0 0 17 20" fill="#f0bdf5"><path d="M2 6.500Q2.500 0 8.500 0T15 6.500V12l2 3v1.500H0V15l2-3ZM5.500 17.500h6q-.7 2-3 2t-3-2Z" /></svg></Slot>
        <Slot $w={52}><Copilot pre /></Slot>
        <Slot $w={14} />
      </Taskbar>
    </Screen>
  );
}
